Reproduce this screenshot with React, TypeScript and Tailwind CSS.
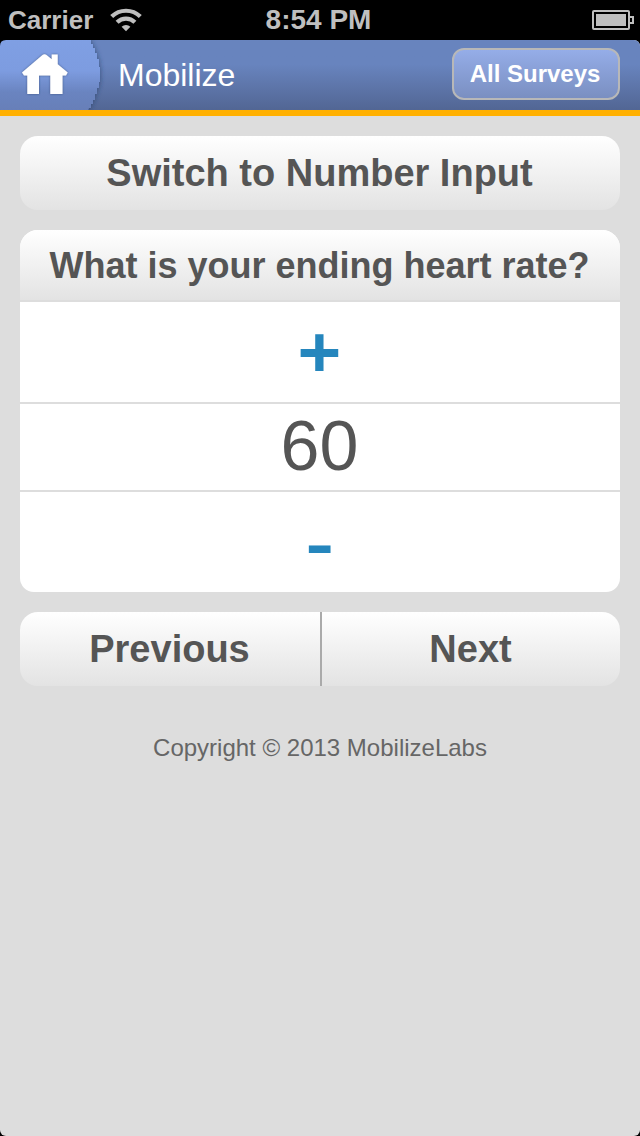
import type { ReactNode } from "react";

function StatusBar() {
  return (
    <div className="grid h-10 grid-cols-3 items-center bg-black text-[#bfbfbf]">
      <div className="flex items-center gap-[17px] pl-2">
        <span className="text-[26px] leading-10 font-bold">Carrier</span>
        <svg width="32" height="24" viewBox="0 0 32 24" fill="none" stroke="currentColor" strokeWidth="4.2">
          <path d="M1.7 8.600A20.400 20.400 0 0 1 30.300 8.600" />
          <path d="M7.100 14.200A12.700 12.700 0 0 1 24.900 14.200" />
          <path d="M16 23.200 11.600 18.800A6.200 6.200 0 0 1 20.400 18.800Z" fill="currentColor" stroke="none" />
        </svg>
      </div>
      <div className="pr-[3px] text-center text-[28px] leading-10 font-bold whitespace-nowrap">8:54 PM</div>
      <div className="flex justify-end pr-1.5">
        <svg width="42" height="20" viewBox="0 0 42 20">
          <rect x="1" y="1" width="36" height="18" rx="1" fill="none" stroke="currentColor" strokeWidth="2" />
          <rect x="4" y="4" width="30" height="12" fill="currentColor" />
          <path d="M37 7h4v6h-4" fill="none" stroke="currentColor" strokeWidth="2" />
        </svg>
      </div>
    </div>
  );
}

function Header() {
  return (
    <header className="flex h-[76px] items-start justify-between rounded-t-md border-b-[6px] border-[#ffb000] bg-linear-to-b from-[#6884be] from-35% to-[#526694] pr-5">
      <div className="flex h-full items-center">
        <svg width="118" height="70" viewBox="0 0 118 70">
          <defs>
            <linearGradient id="tab" x1="0" y1="0" x2="0" y2="1">
              <stop offset="0" stopColor="#80a0e4" />
              <stop offset="0.45" stopColor="#7d9ce0" />
              <stop offset="0.7" stopColor="#6a84c0" />
              <stop offset="1" stopColor="#657db5" />
            </linearGradient>
            <filter id="shade" x="-20%" y="-20%" width="140%" height="140%">
              <feDropShadow dx="1" dy="0" stdDeviation="2" floodColor="#20345f" floodOpacity="0.5" />
            </filter>
            <filter id="glow" x="-20%" y="-20%" width="140%" height="140%">
              <feDropShadow dx="0" dy="0" stdDeviation="1" floodColor="#33466f" floodOpacity="0.8" />
            </filter>
          </defs>
          <path d="M-6-8H86L90 0H91V4H93V8H95V13H97V19H99V27H100V42H99V48H97V54H95V60H93V64H91V68H89L85 78H-6Z" fill="url(#tab)" filter="url(#shade)" />
          <path d="M6 0H0V6Q0 0 6 0Z" fill="#000" />
          <path
            d="M22 32.500 42.500 15Q44.500 13.500 46.500 15L51.700 19.300V14.500H57.700V24.300L67.700 32.500 66 35.500H62.500V54H50.300V35.500H39V54H27.300V35.500H24Z"
            fill="#fff"
            filter="url(#glow)"
          />
        </svg>
        <h1 className="text-[32px] leading-[70px] text-white">Mobilize</h1>
      </div>
      <button className="mt-2 h-[52px] w-[168px] rounded-xl border-2 border-[#b8b8b8] bg-linear-to-b from-[#95ade8] to-[#7a8fc1] pr-0.5 text-2xl font-bold text-white">
        All Surveys
      </button>
    </header>
  );
}

function WideButton({ children, className }: { children: ReactNode; className: string }) {
  return (
    <button className={`h-[74px] bg-linear-to-b from-white to-[#e3e3e3] pt-px text-[38px] font-bold ${className}`}>
      {children}
    </button>
  );
}

export default function App() {
  return (
    <div className="h-[1136px] w-[640px] bg-black font-['Liberation_Sans',Arial,sans-serif]">
      <StatusBar />
      <div className="flex h-[1096px] flex-col rounded-md bg-[#ddd] text-[#555]">
        <Header />
        <main className="flex flex-col gap-5 p-5">
          <WideButton className="w-full rounded-[18px] pr-px">Switch to Number Input</WideButton>
          <section className="overflow-hidden rounded-t-[18px] rounded-b-[14px] bg-white text-center">
            <h2 className="h-[72px] border-b-2 border-[#ddd] bg-linear-to-b from-white to-[#e3e3e3] pr-px text-[36px] leading-[72px] font-bold">
              What is your ending heart rate?
            </h2>
            <button className="flex h-[102px] w-full items-center justify-center border-b-2 border-[#ddd] pr-px text-[70px] leading-[100px] font-bold text-[#2586bd]">
              <span className="scale-x-[1.07] scale-y-[1.04]">+</span>
            </button>
            <div className="h-[88px] border-b-2 border-[#ddd] pr-px text-[70px] leading-[84px]">60</div>
            <button className="flex h-[100px] w-full items-center justify-center pt-1 pr-px text-[70px] leading-[100px] font-bold text-[#2586bd]">
              <span className="scale-x-[1.22] scale-y-[0.9]">-</span>
            </button>
          </section>
          <div className="flex">
            <WideButton className="w-[302px] rounded-l-[18px] border-r-2 border-[#aaa] pr-px">Previous</WideButton>
            <WideButton className="w-[298px] rounded-r-[18px] pr-px">Next</WideButton>
          </div>
        </main>
        <footer className="pt-[26px] text-center text-2xl text-[#666]">Copyright © 2013 MobilizeLabs</footer>
      </div>
    </div>
  );
}
